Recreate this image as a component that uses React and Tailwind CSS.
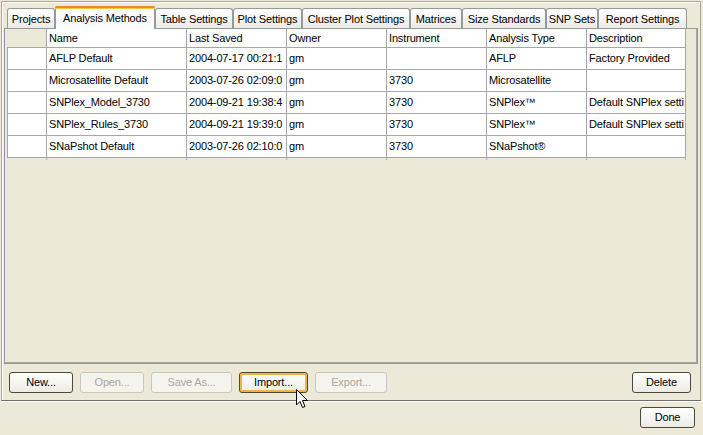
import React from "react";

const tabs = [
  { label: "Projects", w: 48 },
  { label: "Analysis Methods", w: 100, active: true },
  { label: "Table Settings", w: 78 },
  { label: "Plot Settings", w: 69 },
  { label: "Cluster Plot Settings", w: 108 },
  { label: "Matrices", w: 52 },
  { label: "Size Standards", w: 84 },
  { label: "SNP Sets", w: 52 },
  { label: "Report Settings", w: 89 },
];

const cols = [
  { label: "", w: 40 },
  { label: "Name", w: 140 },
  { label: "Last Saved", w: 100 },
  { label: "Owner", w: 100 },
  { label: "Instrument", w: 100 },
  { label: "Analysis Type", w: 100 },
  { label: "Description", w: 99 },
];

const rows = [
  ["", "AFLP Default", "2004-07-17 00:21:1", "gm", "", "AFLP", "Factory Provided"],
  ["", "Microsatellite Default", "2003-07-26 02:09:0", "gm", "3730", "Microsatellite", ""],
  ["", "SNPlex_Model_3730", "2004-09-21 19:38:4", "gm", "3730", "SNPlex™", "Default SNPlex setti"],
  ["", "SNPlex_Rules_3730", "2004-09-21 19:39:0", "gm", "3730", "SNPlex™", "Default SNPlex setti"],
  ["", "SNaPshot Default", "2003-07-26 02:10:0", "gm", "3730", "SNaPshot®", ""],
];

function XpButton({ label, w, disabled, hover }) {
  return (
    <div
      style={{ width: w }}
      className={`h-[21px] rounded-[3px] border flex items-center justify-center ${
        disabled
          ? "border-[#c9c7ba] text-[#aca899] bg-[#f4f3ee]"
          : "border-[#4b4a36] text-black bg-gradient-to-b from-[#ffffff] to-[#ecebe3]"
      } ${hover ? "shadow-[inset_0_0_0_2px_#f1b348]" : ""}`}
    >
      <span className="leading-none">{label}</span>
    </div>
  );
}

export default function App() {
  return (
    <div className="w-[703px] h-[435px] bg-[#ece9d8] text-[11px] tracking-[-0.15px] text-black overflow-hidden relative font-['Liberation_Sans','Arial',sans-serif]">
      {/* outer panel */}
      <div className="ml-px mt-px w-[700px] h-[400px] border border-[#aca899] border-b-[#716f64] shadow-[inset_1px_1px_0_#ffffff,0_1px_0_#ffffff]">
        {/* tab pane */}
        <div className="ml-[2px] mt-[3px] w-[694px]">
          <div className="flex items-end h-[23px] pl-[3px]">
            {tabs.map((t) =>
              t.active ? (
                <div
                  key={t.label}
                  style={{ width: t.w }}
                  className="h-[23px] -mb-px relative z-10 rounded-t-[3px] border border-b-0 border-[#919b9c] bg-[#fcfcfe] flex flex-col"
                >
                  <div className="h-[3px] rounded-t-[2px] bg-[#e68b2c] border-b border-[#ffc73c] -mx-px -mt-px" />
                  <div className="flex-1 flex items-center justify-center pb-[2px]">{t.label}</div>
                </div>
              ) : (
                <div
                  key={t.label}
                  style={{ width: t.w }}
                  className="h-[20px] rounded-t-[3px] border border-b-0 border-[#919b9c] bg-gradient-to-b from-[#ffffff] to-[#ecebe6] flex items-center justify-center pt-[2px]"
                >
                  {t.label}
                </div>
              )
            )}
          </div>
          <div className="h-[336px] border border-[#919b9c] bg-[#ece9d8] pl-[2px] shadow-[inset_-1px_-1px_0_#aca899]">
            {/* table */}
            <div className="w-[680px] bg-[#ece9d8]">
              <div className="flex h-[19px]">
                {cols.map((c, i) => (
                  <div
                    key={i}
                    style={{ width: c.w }}
                    className={`shrink-0 border-r border-b border-[#a7a6aa] px-[2px] flex items-center ${
                      i === 0 ? "bg-[#ece9d8]" : "bg-white"
                    }`}
                  >
                    {c.label}
                  </div>
                ))}
              </div>
              {rows.map((r, ri) => (
                <div key={ri} className="flex h-[22px]">
                  {r.map((v, ci) => (
                    <div
                      key={ci}
                      style={{ width: cols[ci].w }}
                      className={`shrink-0 bg-white border-r border-b border-[#a7a6aa] px-[2px] flex items-center whitespace-nowrap overflow-hidden ${
                        ci === 0 ? "border-l" : ""
                      }`}
                    >
                      {v}
                    </div>
                  ))}
                </div>
              ))}
              <div className="flex h-[2px]">
                {cols.map((c, i) => (
                  <div key={i} style={{ width: c.w }} className="shrink-0 border-r border-[#a7a6aa]" />
                ))}
              </div>
            </div>
          </div>
        </div>
        {/* button row */}
        <div className="flex items-center mt-[8px] pl-[7px] pr-[9px]">
          <div className="flex gap-[7px]">
            <XpButton label="New..." w={64} />
            <XpButton label="Open..." w={64} disabled />
            <XpButton label="Save As..." w={81} disabled />
            <XpButton label="Import..." w={69} hover />
            <XpButton label="Export..." w={72} disabled />
          </div>
          <div className="ml-auto">
            <XpButton label="Delete" w={59} />
          </div>
        </div>
      </div>
      {/* bottom */}
      <div className="flex justify-end pr-[8px] mt-[6px]">
        <XpButton label="Done" w={55} />
      </div>

      {/* mouse cursor */}
      <svg className="absolute left-[296px] top-[389px]" width="13" height="20" viewBox="0 0 13 20">
        <path
          d="M0.5 0.5 L0.5 16 L4 12.5 L6.5 18.5 L9 17.5 L6.5 11.5 L11.5 11.5 Z"
          fill="#ffffff"
          stroke="#000000"
          strokeWidth="1"
          strokeLinejoin="miter"
        />
      </svg>
    </div>
  );
}
